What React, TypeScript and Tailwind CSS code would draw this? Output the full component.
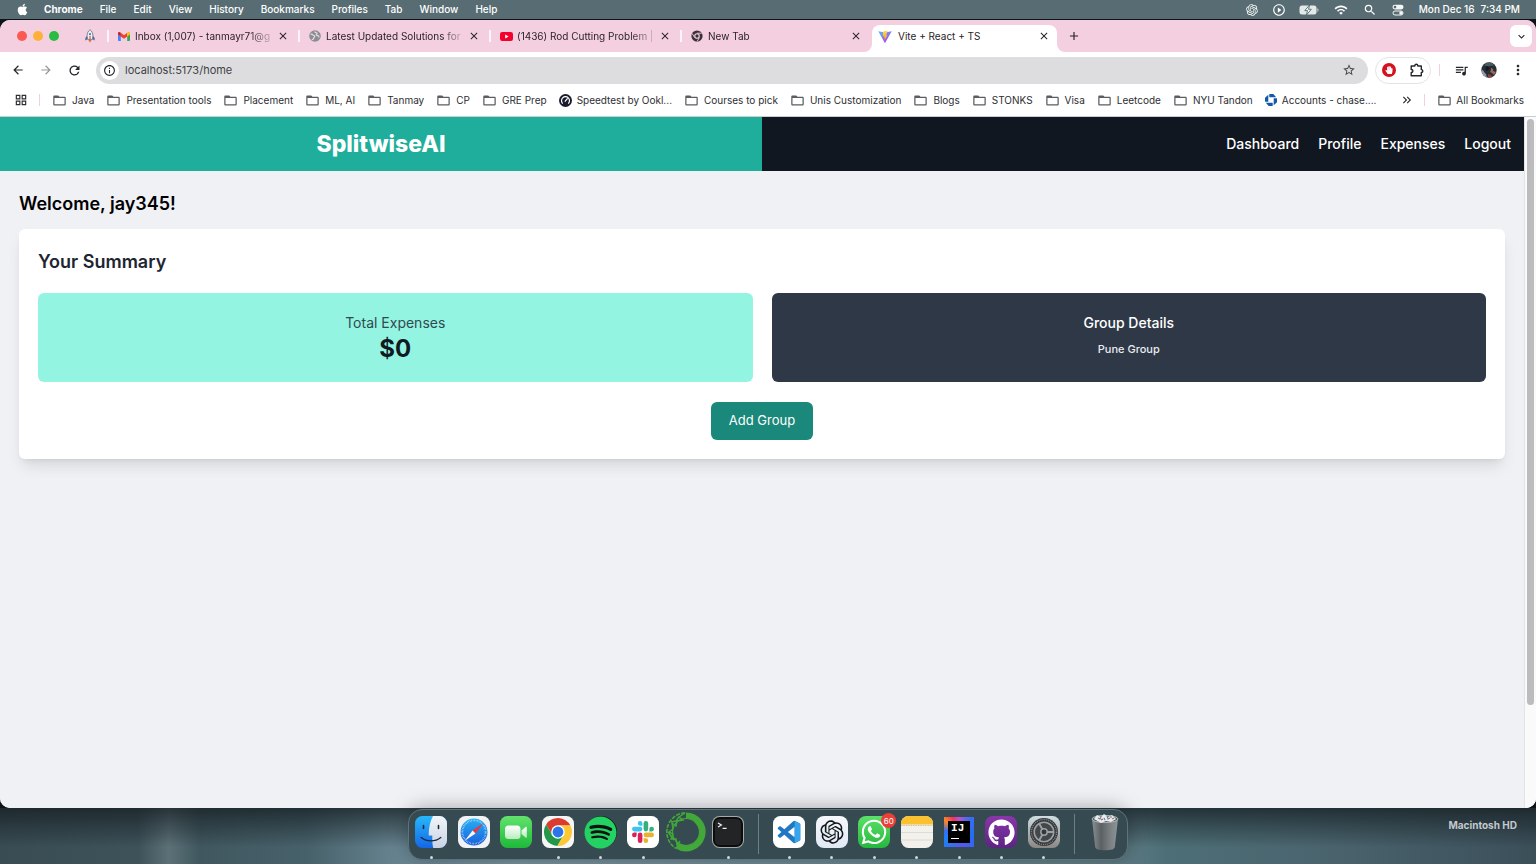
import type { ReactNode } from "react";
import { FaApple, FaSpotify, FaWhatsapp, FaGithub, FaHandPaper } from "react-icons/fa";
import { RiOpenaiFill } from "react-icons/ri";
import {
  MdArrowBack,
  MdArrowForward,
  MdRefresh,
  MdInfoOutline,
  MdFolderOpen,
  MdStarBorder,
  MdQueueMusic,
  MdMoreVert,
  MdKeyboardArrowDown,
  MdClose,
  MdAdd,
  MdOutlineGridView,
  MdPlayCircleOutline,
  MdWifi,
  MdSearch,
  MdKeyboardDoubleArrowRight,
} from "react-icons/md";

const sans = "font-['Inter','Liberation_Sans',sans-serif]";

/* ---------- menu bar ---------- */

const menus = ["File", "Edit", "View", "History", "Bookmarks", "Profiles", "Tab", "Window", "Help"];

function BatteryIcon() {
  return (
    <svg viewBox="0 0 20 12" className="h-3 w-5" aria-hidden="true">
      <rect x="0.5" y="1.5" width="17" height="9" rx="2.5" fill="#f3f5f6" fillOpacity="0.9" />
      <path d="M18.3 4.3v3.4c.9-.3 1.2-.9 1.2-1.700s-.3-1.400-1.200-1.700z" fill="#c9d1d4" />
      <path d="M10.600 1 5.800 6.600h2.700L7.400 11l4.900-5.700H9.500z" fill="#f8fafa" stroke="#566a70" strokeWidth="0.9" />
    </svg>
  );
}

function ControlCenterIcon() {
  return (
    <svg viewBox="0 0 12 12" className="size-3" aria-hidden="true">
      <rect x="0.500" y="0.800" width="11" height="4.600" rx="2.300" fill="#f3f5f6" />
      <circle cx="3" cy="3.100" r="1.300" fill="#566a70" />
      <rect x="1" y="7" width="10" height="4" rx="2" fill="none" stroke="#f3f5f6" strokeWidth="1" />
      <circle cx="9" cy="9" r="1.800" fill="#f3f5f6" />
    </svg>
  );
}

function MenuBar() {
  return (
    <header className="flex h-[19px] shrink-0 items-center justify-between bg-[#586d73] px-4 text-[10px] font-medium text-white">
      <nav aria-label="Menu bar" className="flex items-center gap-[17px]">
        <FaApple className="-mr-[2px] size-[13px]" />
        <button className="font-bold">Chrome</button>
        {menus.map((m) => (
          <button key={m}>{m}</button>
        ))}
      </nav>
      <div className="flex items-center gap-[15px]">
        <RiOpenaiFill className="-mr-[2px] size-[14px]" />
        <MdPlayCircleOutline className="-mr-[2px] size-[14px]" />
        <BatteryIcon />
        <MdWifi className="size-[14px]" />
        <MdSearch className="size-[14px]" />
        <ControlCenterIcon />
        <div className="flex gap-[6px] whitespace-nowrap">
          <span>Mon Dec 16</span>
          <span>7:34 PM</span>
        </div>
      </div>
    </header>
  );
}

/* ---------- favicons ---------- */

function RocketIcon() {
  return (
    <svg viewBox="0 0 12 14" className="h-[14px] w-3" aria-hidden="true">
      <path d="M3.300 6.500 1.300 9v2.500l2.400-1.300zM8.700 6.500l2 2.500v2.500l-2.400-1.300z" fill="#4a6fa5" />
      <path d="M6 .7c2 1.500 2.900 3.700 2.900 5.900 0 1.600-.4 3-1 4.200H4.100c-.6-1.200-1-2.600-1-4.200C3.100 4.400 4 2.200 6 .7z" fill="#eef0f4" stroke="#555b6b" strokeWidth="0.7" />
      <circle cx="6" cy="5.200" r="1.100" fill="#4f78b5" />
      <path d="M6 7v4" stroke="#c23b30" strokeWidth="1" />
      <path d="M4.600 11h2.800L6 13.800z" fill="#e2702a" />
    </svg>
  );
}

function GmailIcon() {
  return (
    <svg viewBox="0 0 12 9" className="h-[9px] w-3" aria-hidden="true">
      <path d="M0 1.500V8.200c0 .4.400.8.800.8h2V4.400z" fill="#4285f4" />
      <path d="M12 1.500V8.200c0 .4-.4.800-.8.800h-2V4.400z" fill="#34a853" />
      <path d="M2.800 4.400V.8L6 3.200 9.200.8v3.600L6 6.800z" fill="#ea4335" />
      <path d="M0 1.400v1L2.800 4.400V.8L2 .3C1.100-.3 0 .3 0 1.400z" fill="#c5221f" />
      <path d="M12 1.400v1L9.200 4.400V.8l.8-.5c.9-.6 2 0 2 1.100z" fill="#fbbc04" />
    </svg>
  );
}

function GlobeIcon() {
  return (
    <svg viewBox="0 0 12 12" className="size-3" aria-hidden="true">
      <circle cx="6" cy="6" r="5.800" fill="#8b8f94" />
      <path d="M1.500 4.200c1.200-.4 2 .2 2.600.9s1.800.3 1.700 1.400-1.300 1-1.400 2.200c0 .8-.9 1.100-1.600.5M6 1.400c-.3 1 .8 1.300 1.500 1.300s.9 1 .1 1.500 0 1.400 1 1.400 1.500.8 1.300 1.900" fill="none" stroke="#eadce3" strokeWidth="1.100" />
    </svg>
  );
}

function YoutubeIcon() {
  return (
    <svg viewBox="0 0 13 9" className="h-[9px] w-[13px]" aria-hidden="true">
      <rect width="13" height="9" rx="2.200" fill="#f5002d" />
      <path d="M5.200 2.500v4l3.400-2z" fill="#fff" />
    </svg>
  );
}

function ChromeMonoIcon() {
  return (
    <svg viewBox="0 0 32 32" className="size-3" aria-hidden="true">
      <circle cx="16" cy="16" r="15" fill="#3a3237" />
      <path d="M16 8.500h13M9.500 20 3 9M22.500 20 16 31" stroke="#f4cfe0" strokeWidth="2.400" />
      <circle cx="16" cy="16" r="6" fill="#3a3237" stroke="#f4cfe0" strokeWidth="3" />
    </svg>
  );
}

function ViteIcon() {
  return (
    <svg viewBox="0 0 14 13" className="h-[13px] w-[14px]" aria-hidden="true">
      <defs>
        <linearGradient id="vite-body" x1="0" y1="0" x2="0.700" y2="1">
          <stop offset="0" stopColor="#47bfff" />
          <stop offset="1" stopColor="#b03be8" />
        </linearGradient>
        <linearGradient id="vite-bolt" x1="0" y1="0" x2="0" y2="1">
          <stop offset="0" stopColor="#ffdc5a" />
          <stop offset="1" stopColor="#ff9a1f" />
        </linearGradient>
      </defs>
      <path d="M.3 1.200 7 2.400l6.700-1.200L7.200 12.800a.3.300 0 0 1-.5 0z" fill="url(#vite-body)" />
      <path d="M9.700.4 5 1.400 4.700 6.200l1.400-.3-.4 2 1.300-.3-.6 2.800 3.200-5.100-1.500.3.800-2.300z" fill="url(#vite-bolt)" />
    </svg>
  );
}

/* ---------- tab strip ---------- */

const tabs: { title: string; icon: ReactNode }[] = [
  { title: "Inbox (1,007) - tanmayr71@g", icon: <GmailIcon /> },
  { title: "Latest Updated Solutions for", icon: <GlobeIcon /> },
  { title: "(1436) Rod Cutting Problem |", icon: <YoutubeIcon /> },
  { title: "New Tab", icon: <ChromeMonoIcon /> },
];

function TabStrip() {
  return (
    <div className="flex h-8 shrink-0 items-center bg-[#f4cfe0] pl-[17px] pr-1 text-[10px] text-[#2b2329]">
      <div className="flex gap-[6px]">
        <button aria-label="Close window" className="size-[10px] rounded-full bg-[#fb5a52]" />
        <button aria-label="Minimize window" className="size-[10px] rounded-full bg-[#fdb13a]" />
        <button aria-label="Zoom window" className="size-[10px] rounded-full bg-[#28bd42]" />
      </div>
      <button aria-label="Pinned tab" className="ml-[25px] mr-[11px]">
        <RocketIcon />
      </button>
      {tabs.map((t) => (
        <div key={t.title} className="flex w-[191px] min-w-0 shrink items-center">
          <span className="h-3 w-[2px] shrink-0 bg-white/80" />
          <span className="ml-2 flex w-[14px] shrink-0 justify-center">{t.icon}</span>
          <span className="ml-1 min-w-0 grow whitespace-nowrap mask-r-from-80%">{t.title}</span>
          <button aria-label={`Close ${t.title}`} className="mr-[9px]">
            <MdClose className="size-3" />
          </button>
        </div>
      ))}
      <div className="relative ml-px flex w-[185px] shrink items-center self-stretch">
        <div className="mt-[5px] flex h-[27px] w-full items-center rounded-t-lg bg-white pb-[5px] pl-[6px] pr-[7px]">
          <ViteIcon />
          <span className="ml-[6px] grow">Vite + React + TS</span>
          <button aria-label="Close Vite + React + TS">
            <MdClose className="size-3" />
          </button>
        </div>
        <svg viewBox="0 0 8 8" className="absolute -left-2 bottom-0 size-2" aria-hidden="true">
          <path d="M8 0v8H0a8 8 0 0 0 8-8z" fill="#fff" />
        </svg>
        <svg viewBox="0 0 8 8" className="absolute -right-2 bottom-0 size-2" aria-hidden="true">
          <path d="M0 0v8h8a8 8 0 0 1-8-8z" fill="#fff" />
        </svg>
      </div>
      <button aria-label="New tab" className="ml-[10px]">
        <MdAdd className="size-[14px]" />
      </button>
      <button aria-label="Search tabs" className="ml-auto flex size-[22px] items-center justify-center rounded-md bg-white">
        <MdKeyboardArrowDown className="size-[13px]" />
      </button>
    </div>
  );
}

/* ---------- toolbar ---------- */

function PuzzleIcon() {
  return (
    <svg viewBox="0 0 14 14" className="size-[14px]" aria-hidden="true">
      <path
        d="M1.200 3h3.600c0-1 .5-1.700 1.500-1.700S7.800 2 7.800 3h3.500v3.600c1 0 1.500.6 1.500 1.400s-.5 1.500-1.500 1.500v3.300H1.200V9.500c1 0 1.700-.6 1.700-1.500S2.200 6.500 1.200 6.500z"
        fill="none"
        stroke="#23262a"
        strokeWidth="1.400"
        strokeLinejoin="round"
      />
    </svg>
  );
}

function Toolbar() {
  return (
    <div className="flex h-[36px] shrink-0 items-center bg-white pl-[11px] pr-[10px] text-[#23262a]">
      <button aria-label="Back">
        <MdArrowBack className="size-[14px]" />
      </button>
      <button aria-label="Forward" className="ml-[14px] text-[#94979b]">
        <MdArrowForward className="size-[14px]" />
      </button>
      <button aria-label="Reload" className="ml-[14px]">
        <MdRefresh className="size-[15px]" />
      </button>
      <div className="ml-[14px] flex h-[27px] grow items-center rounded-full bg-[#dddddf] pl-1 pr-3">
        <button aria-label="Site information" className="flex size-[19px] items-center justify-center rounded-full bg-white">
          <MdInfoOutline className="size-[13px]" />
        </button>
        <input
          aria-label="Address"
          defaultValue="localhost:5173/home"
          className="ml-[6px] min-w-0 grow bg-transparent text-[11px] text-[#3f4246] outline-none"
        />
        <button aria-label="Bookmark this tab">
          <MdStarBorder className="size-[14px] text-[#44474a]" />
        </button>
      </div>
      <div className="ml-[7px] flex h-[27px] w-14 items-center justify-between rounded-full border border-[#e3e3e6] px-[6px]">
        <button aria-label="Ad blocker" className="flex size-[14px] items-center justify-center rounded-full bg-[#d5101f] text-white">
          <FaHandPaper className="size-2" />
        </button>
        <button aria-label="Extensions">
          <PuzzleIcon />
        </button>
      </div>
      <span className="ml-2 h-3 w-px bg-[#f4cfe0]" />
      <button aria-label="Media controls" className="ml-[14px]">
        <MdQueueMusic className="size-[15px]" />
      </button>
      <button aria-label="Account" className="ml-3">
        <svg viewBox="0 0 16 16" className="size-4" aria-hidden="true">
          <clipPath id="avatar-clip">
            <circle cx="8" cy="8" r="7.700" />
          </clipPath>
          <g clipPath="url(#avatar-clip)">
            <rect width="16" height="16" fill="#2a2d38" />
            <path d="M0 7 3 2l5-2H0z" fill="#7d93a6" />
            <path d="M3 4c2-1 3 1 6 0s3 1 4-1l-3-3-5 1z" fill="#4a5a62" />
            <path d="M10 6c1 0 3 1 2 3l3 1-2 3-2-2-2-1 1-2z" fill="#9a6a52" />
            <path d="M1 8c2 0 2 3 4 4l1 4-5-3z" fill="#8e9ca5" />
            <path d="M6 4c-2 1-2 4 0 5l3-3z" fill="#15171d" />
            <path d="m7 12 3 1 2 3H7z" fill="#8c3f3c" />
          </g>
        </svg>
      </button>
      <button aria-label="More" className="ml-[13px]">
        <MdMoreVert className="size-4" />
      </button>
    </div>
  );
}

/* ---------- bookmarks ---------- */

function SpeedtestIcon() {
  return (
    <svg viewBox="0 0 14 14" className="size-[13px] shrink-0" aria-hidden="true">
      <circle cx="7" cy="7" r="7" fill="#1a1b2e" />
      <path d="M4 10.300a4.300 4.300 0 1 1 6 0" fill="none" stroke="#fff" strokeWidth="1.300" />
      <path d="m6.300 8.300 3-3.700" stroke="#fff" strokeWidth="1.300" />
    </svg>
  );
}

function ChaseIcon() {
  return (
    <svg viewBox="0 0 12 12" className="size-3 shrink-0" aria-hidden="true">
      <path
        d="M4.300 0h4L11.200 3.300H4.300zM12 4.300v4L8.700 11.200V4.300zM7.700 12h-4L.8 8.700h6.900zM0 7.700v-4L3.300.8v6.900z"
        fill="#1259a8"
      />
    </svg>
  );
}

function Folder() {
  return <MdFolderOpen className="size-[15px] shrink-0 text-[#5a5d61]" />;
}

const bookmarks: { label: string; icon?: ReactNode }[] = [
  { label: "Java" },
  { label: "Presentation tools" },
  { label: "Placement" },
  { label: "ML, AI" },
  { label: "Tanmay" },
  { label: "CP" },
  { label: "GRE Prep" },
  { label: "Speedtest by Ookl...", icon: <SpeedtestIcon /> },
  { label: "Courses to pick" },
  { label: "Unis Customization" },
  { label: "Blogs" },
  { label: "STONKS" },
  { label: "Visa" },
  { label: "Leetcode" },
  { label: "NYU Tandon" },
  { label: "Accounts - chase....", icon: <ChaseIcon /> },
];

function BookmarksBar() {
  return (
    <nav aria-label="Bookmarks" className="flex h-[29px] shrink-0 items-center border-b border-[#c9ccd2] bg-white pb-1 pl-[14px] pr-3 text-[10px] text-[#2c2e32]">
      <button aria-label="Apps">
        <MdOutlineGridView className="size-[14px]" />
      </button>
      <span className="ml-[11px] h-3 w-px shrink-0 bg-[#f4cfe0]" />
      <div className="ml-3 flex min-w-0 grow items-center gap-3">
        {bookmarks.map((b) => (
          <a key={b.label} href="#" className="flex items-center gap-[5px] whitespace-nowrap">
            {b.icon ?? <Folder />}
            {b.label}
          </a>
        ))}
      </div>
      <button aria-label="More bookmarks">
        <MdKeyboardDoubleArrowRight className="size-[14px]" />
      </button>
      <span className="ml-[10px] h-3 w-px shrink-0 bg-[#f4cfe0]" />
      <a href="#" className="ml-3 flex items-center gap-1 whitespace-nowrap">
        <Folder />
        All Bookmarks
      </a>
    </nav>
  );
}

/* ---------- web page ---------- */

const links = ["Dashboard", "Profile", "Expenses", "Logout"];

function HomePage() {
  return (
    <div className="flex min-h-0 grow bg-[#f0f1f5]">
      <div className="min-w-0 grow">
        <div className="grid h-[54px] grid-cols-2 items-stretch">
          <div className="flex items-center justify-center bg-[#1fae9b]">
            <h1 className="text-[23px] font-extrabold text-white">SplitwiseAI</h1>
          </div>
          <nav aria-label="Main" className="flex items-center justify-end gap-[19px] bg-[#111721] pb-[2px] pr-[13px] text-[14px] font-medium text-white">
            {links.map((l) => (
              <a key={l} href="#">
                {l}
              </a>
            ))}
          </nav>
        </div>
        <main className="px-[19px] pt-[19px]">
          <h2 className="text-[18px] leading-7 font-semibold text-black">Welcome, jay345!</h2>
          <section className="mt-[11px] rounded-md bg-white p-[19px] shadow-lg">
            <h3 className="text-[18px] leading-7 font-semibold text-[#1d2531]">Your Summary</h3>
            <div className="mt-[17px] grid grid-cols-2 gap-[19px] text-center">
              <div className="h-[89px] rounded-md bg-[#93f5e1] pt-[19px]">
                <h4 className="text-[14px] leading-[22px] text-[#2f4a50]">Total Expenses</h4>
                <p className="text-[24px] leading-[30px] font-bold text-[#0f1a22]">$0</p>
              </div>
              <div className="h-[89px] rounded-md bg-[#2f3847] pt-[19px] text-white">
                <h4 className="text-[14px] leading-[22px] font-medium">Group Details</h4>
                <p className="text-[11px] leading-[30px] font-medium text-[#e9ebef]">Pune Group</p>
              </div>
            </div>
            <div className="mt-5 flex justify-center">
              <button className="h-[38px] rounded-md bg-[#1a887b] px-[18px] text-[13px] text-white">Add Group</button>
            </div>
          </section>
        </main>
      </div>
      <div className="w-3 shrink-0 border-l border-[#e4e4e6] bg-[#fafafa] px-[2px] pt-[2px]">
        <div className="h-[85%] w-[7px] rounded-full bg-[#bcbcbe]" />
      </div>
    </div>
  );
}

/* ---------- dock ---------- */

function FinderIcon() {
  return (
    <svg viewBox="0 0 32 32" className="size-8" aria-hidden="true">
      <defs>
        <linearGradient id="finder-l" x1="0" y1="0" x2="0" y2="1">
          <stop offset="0" stopColor="#27b8fb" />
          <stop offset="1" stopColor="#1566e6" />
        </linearGradient>
        <linearGradient id="finder-r" x1="0" y1="0" x2="0" y2="1">
          <stop offset="0" stopColor="#f2f5f9" />
          <stop offset="1" stopColor="#c9d3e2" />
        </linearGradient>
      </defs>
      <rect width="32" height="32" rx="7.500" fill="url(#finder-l)" />
      <path d="M18 0h6.500A7.500 7.500 0 0 1 32 7.500v17a7.500 7.500 0 0 1-7.500 7.500h-6.300c-.8-3.500-1-7-.9-12.500h-3.600C13.700 12 15 5.500 18 0z" fill="url(#finder-r)" />
      <path d="M8.500 9.500v3M23.500 9.500v3" stroke="#16283f" strokeWidth="1.600" strokeLinecap="round" />
      <path d="M6.200 21.500c5.500 4.500 14 4.500 19.600 0" fill="none" stroke="#16283f" strokeWidth="1.300" strokeLinecap="round" />
    </svg>
  );
}

function SafariIcon() {
  return (
    <svg viewBox="0 0 32 32" className="size-8" aria-hidden="true">
      <defs>
        <linearGradient id="safari-dial" x1="0" y1="0" x2="0" y2="1">
          <stop offset="0" stopColor="#27b0f5" />
          <stop offset="1" stopColor="#1a5edc" />
        </linearGradient>
      </defs>
      <rect width="32" height="32" rx="7.500" fill="#f1f2f4" />
      <circle cx="16" cy="16" r="13.500" fill="url(#safari-dial)" />
      <circle cx="16" cy="16" r="11.700" fill="none" stroke="#fff" strokeOpacity="0.800" strokeWidth="1.800" strokeDasharray="0.500 1.031" />
      <path d="M25.500 7 14.600 14.500 17.500 17.400z" fill="#e8383b" />
      <path d="M6.500 25 14.600 14.500 17.500 17.400z" fill="#f4f6f9" />
    </svg>
  );
}

function FaceTimeIcon() {
  return (
    <svg viewBox="0 0 32 32" className="size-8" aria-hidden="true">
      <defs>
        <linearGradient id="ft-bg" x1="0" y1="0" x2="0" y2="1">
          <stop offset="0" stopColor="#61e36c" />
          <stop offset="1" stopColor="#1fb83a" />
        </linearGradient>
        <linearGradient id="ft-cam" x1="0" y1="0" x2="0" y2="1">
          <stop offset="0" stopColor="#fff" />
          <stop offset="1" stopColor="#b8ecc0" />
        </linearGradient>
      </defs>
      <rect width="32" height="32" rx="7.500" fill="url(#ft-bg)" />
      <rect x="5" y="9.500" width="15.500" height="13.500" rx="3.500" fill="url(#ft-cam)" />
      <path d="m21.500 14.500 4-3.500c.6-.5 1.300-.2 1.300.6v9.300c0 .8-.7 1.100-1.300.6l-4-3.500z" fill="url(#ft-cam)" />
    </svg>
  );
}

function ChromeIcon() {
  return (
    <svg viewBox="0 0 32 32" className="size-8" aria-hidden="true">
      <rect width="32" height="32" rx="7.500" fill="#f6f6f6" />
      <g transform="translate(-1.300 -1.300) scale(1.080)">
        <path d="M5.040 9.015A13 13 0 0 1 27.530 10H16L10.800 19z" fill="#dd3b2f" />
        <path d="M5.040 9.015A13 13 0 0 0 15.430 28.985L21.200 19H10.800z" fill="#22984a" />
        <path d="M27.530 10A13 13 0 0 1 15.430 28.985L21.200 19 16 10z" fill="#fcc934" />
        <circle cx="16" cy="16" r="6.300" fill="#fff" />
        <circle cx="16" cy="16" r="5" fill="#2a76e8" />
      </g>
    </svg>
  );
}

function SpotifyIcon() {
  return (
    <span className="flex size-8 items-center justify-center rounded-full bg-[#0c1310]">
      <FaSpotify className="size-[33px] shrink-0 text-[#24d163]" />
    </span>
  );
}

function SlackIcon() {
  return (
    <svg viewBox="-5.500 -5.500 35 35" className="size-8" aria-hidden="true">
      <rect x="-5.500" y="-5.500" width="35" height="35" rx="8.200" fill="#fff" />
      <path fill="#dd1f59" d="M5.042 15.165a2.528 2.528 0 0 1-2.520 2.523A2.528 2.528 0 0 1 0 15.165a2.527 2.527 0 0 1 2.522-2.520h2.520v2.520zM6.313 15.165a2.527 2.527 0 0 1 2.521-2.520 2.527 2.527 0 0 1 2.521 2.520v6.313A2.528 2.528 0 0 1 8.834 24a2.528 2.528 0 0 1-2.521-2.522v-6.313z" />
      <path fill="#3cc3ee" d="M8.834 5.042a2.528 2.528 0 0 1-2.521-2.520A2.528 2.528 0 0 1 8.834 0a2.528 2.528 0 0 1 2.521 2.522v2.520H8.834zM8.834 6.313a2.528 2.528 0 0 1 2.521 2.521 2.528 2.528 0 0 1-2.521 2.521H2.522A2.528 2.528 0 0 1 0 8.834a2.528 2.528 0 0 1 2.522-2.521h6.312z" />
      <path fill="#32b07d" d="M18.956 8.834a2.528 2.528 0 0 1 2.522-2.521A2.528 2.528 0 0 1 24 8.834a2.528 2.528 0 0 1-2.522 2.521h-2.522V8.834zM17.688 8.834a2.528 2.528 0 0 1-2.523 2.521 2.527 2.527 0 0 1-2.520-2.521V2.522A2.527 2.527 0 0 1 15.165 0a2.528 2.528 0 0 1 2.523 2.522v6.312z" />
      <path fill="#e9b131" d="M15.165 18.956a2.528 2.528 0 0 1 2.523 2.522A2.528 2.528 0 0 1 15.165 24a2.527 2.527 0 0 1-2.520-2.522v-2.522h2.520zM15.165 17.688a2.527 2.527 0 0 1-2.520-2.523 2.526 2.526 0 0 1 2.520-2.520h6.313A2.527 2.527 0 0 1 24 15.165a2.528 2.528 0 0 1-2.522 2.523h-6.313z" />
    </svg>
  );
}

function AnacondaIcon() {
  return (
    <svg viewBox="0 0 40 40" className="size-10" aria-hidden="true">
      <path d="M20 3.500a16.500 16.500 0 1 1-9 30.300" fill="none" stroke="#41a839" strokeWidth="6" />
      <circle cx="20" cy="20" r="13.500" fill="none" stroke="#41a839" strokeWidth="1.200" />
      <path d="M19 .8A19.300 19.300 0 0 0 10 36.500" fill="none" stroke="#41a839" strokeWidth="1.600" strokeDasharray="4 1.200" />
      <path d="m19 1-6 4 4 3-6 1-1 5-4-3 1 6-4 3 4 2-2 5 5 0 1 6 3-4M13 5l-3 4M10 9 5 10M2 20l6 8" fill="none" stroke="#41a839" strokeWidth="1.400" />
    </svg>
  );
}

function TerminalIcon() {
  return (
    <svg viewBox="0 0 32 32" className="size-8" aria-hidden="true">
      <rect width="32" height="32" rx="7.500" fill="#a5a9aa" />
      <rect x="1" y="1" width="30" height="30" rx="6.700" fill="#0c0d0d" />
      <rect x="3" y="3" width="26" height="26" rx="4.500" fill="#232425" />
      <path d="m6 7 3.400 2L6 11M10.600 12.300h4" fill="none" stroke="#f0f0f0" strokeWidth="1.200" />
    </svg>
  );
}

function VsCodeIcon() {
  return (
    <svg viewBox="-5 -5 34 34" className="size-8" aria-hidden="true">
      <rect x="-5" y="-5" width="34" height="34" rx="8" fill="#fff" />
      <path fill="#1e78c2" d="M23.150 2.587L18.210.210a1.494 1.494 0 0 0-1.705.290l-9.460 8.630-4.120-3.128a.999.999 0 0 0-1.276.057L.327 7.261A1 1 0 0 0 .326 8.740L3.899 12 .326 15.260a1 1 0 0 0 .001 1.479L1.650 17.940a.999.999 0 0 0 1.276.057l4.120-3.128 9.460 8.630a1.492 1.492 0 0 0 1.704.290l4.942-2.377A1.500 1.500 0 0 0 24 20.060V3.939a1.500 1.500 0 0 0-.850-1.352zm-5.146 14.861L10.826 12l7.178-5.448v10.896z" />
      <path fill="#37a4ee" d="m18 .1 5.150 2.487c.5.250.850.750.850 1.352V20.060c0 .6-.3 1.100-.850 1.352L18 23.900z" />
    </svg>
  );
}

function NotesIcon() {
  return (
    <svg viewBox="0 0 32 32" className="size-8" aria-hidden="true">
      <clipPath id="notes-clip">
        <rect width="32" height="32" rx="7.500" />
      </clipPath>
      <g clipPath="url(#notes-clip)">
        <rect width="32" height="32" fill="#f3f1ec" />
        <rect width="32" height="8.500" fill="#fcc12f" />
        <path d="M0 9.500h32" stroke="#b9ad92" strokeWidth="0.900" strokeDasharray="0.800 0.900" />
        <path d="M0 16.500h32M0 24h32" stroke="#d8d5ce" strokeWidth="0.800" />
      </g>
    </svg>
  );
}

function IntellijIcon() {
  return (
    <span className="flex size-[30px] items-center justify-center bg-[conic-gradient(from_0deg,#c04fd0,#3a6cf5_40deg,#1f6ff0_110deg,#5a55f0_170deg,#1a82f5_240deg,#3a6cf5_275deg,#fb8a25_310deg,#f5315d_335deg,#c04fd0)]">
      <span className="flex size-[22px] flex-col items-start bg-black pl-[3px] pt-[2px] font-['Liberation_Mono',monospace] text-[11px] leading-[11px] font-bold text-white">
        IJ
        <span className="mt-[4px] h-px w-2 bg-white" />
      </span>
    </span>
  );
}

function SettingsIcon() {
  return (
    <svg viewBox="0 0 32 32" className="size-8" aria-hidden="true">
      <defs>
        <linearGradient id="set-bg" x1="0" y1="0" x2="0" y2="1">
          <stop offset="0" stopColor="#cfdde2" />
          <stop offset="1" stopColor="#8b8784" />
        </linearGradient>
      </defs>
      <rect width="32" height="32" rx="7.500" fill="url(#set-bg)" />
      <circle cx="16" cy="16" r="14" fill="#33373a" />
      <circle cx="16" cy="16" r="12.500" fill="none" stroke="#858a8d" strokeWidth="1.400" strokeDasharray="1 0.963" />
      <circle cx="16" cy="16" r="9.800" fill="#43474a" stroke="#9ba0a3" strokeWidth="1.600" />
      <circle cx="16" cy="16" r="3.200" fill="#33373a" stroke="#9ba0a3" strokeWidth="1.500" />
      <path d="M19 16h6.500M14.500 13.400l-3.300-5.700M14.500 18.600l-3.300 5.700" stroke="#9ba0a3" strokeWidth="1.900" />
    </svg>
  );
}

function TrashIcon() {
  return (
    <svg viewBox="0 0 30 38" className="h-[38px] w-[30px]" aria-hidden="true">
      <defs>
        <linearGradient id="trash" x1="0" y1="0" x2="1" y2="0">
          <stop offset="0" stopColor="#8b9193" />
          <stop offset="0.350" stopColor="#5b6062" />
          <stop offset="0.650" stopColor="#777d7f" />
          <stop offset="1" stopColor="#8f9597" />
        </linearGradient>
      </defs>
      <path d="M2 6h26l-3.200 28c-.2 2-3.500 3.300-9.800 3.300S5.400 36 5.200 34z" fill="url(#trash)" />
      <ellipse cx="15" cy="6" rx="13" ry="3.600" fill="#5a5f61" stroke="#b8bdbf" strokeWidth="0.900" />
      <path d="m4 6 3-4 4 2 3-3 4 3 4-2 4 4-5 3-5-1-5 2z" fill="#e9ecee" />
      <path d="m8 5 2 1 1-2M17 3l1 3 2-1M14 5l1 2M22 6l2-1" fill="none" stroke="#6a7f94" strokeWidth="1.100" />
      <path d="m11 7 2-1M20 4h2" stroke="#c5573f" strokeWidth="1.200" />
    </svg>
  );
}

type DockApp = { name: string; icon: ReactNode; running?: boolean; badge?: string };

const leftApps: DockApp[] = [
  { name: "Finder", icon: <FinderIcon />, running: true },
  { name: "Safari", icon: <SafariIcon /> },
  { name: "FaceTime", icon: <FaceTimeIcon /> },
  { name: "Google Chrome", icon: <ChromeIcon />, running: true },
  { name: "Spotify", icon: <SpotifyIcon />, running: true },
  { name: "Slack", icon: <SlackIcon />, running: true },
  { name: "Anaconda", icon: <AnacondaIcon /> },
  { name: "Terminal", icon: <TerminalIcon />, running: true },
];

const rightApps: DockApp[] = [
  { name: "Visual Studio Code", icon: <VsCodeIcon />, running: true },
  {
    name: "ChatGPT",
    running: true,
    icon: (
      <span className="flex size-8 items-center justify-center rounded-lg bg-gradient-to-b from-[#f6f9fd] to-[#dfe9f5] text-[#15181b]">
        <RiOpenaiFill className="size-7" />
      </span>
    ),
  },
  {
    name: "WhatsApp",
    running: true,
    badge: "60",
    icon: (
      <span className="flex size-8 items-center justify-center rounded-lg bg-gradient-to-b from-[#5be169] to-[#22b83c] text-white">
        <FaWhatsapp className="size-[28px]" />
      </span>
    ),
  },
  { name: "Notes", icon: <NotesIcon />, running: true },
  { name: "IntelliJ IDEA", icon: <IntellijIcon />, running: true },
  {
    name: "GitHub Desktop",
    running: true,
    icon: (
      <span className="flex size-8 items-center justify-center rounded-lg bg-gradient-to-b from-[#8a36ab] to-[#5c2483] text-white">
        <FaGithub className="size-[27px]" />
      </span>
    ),
  },
  { name: "System Settings", icon: <SettingsIcon />, running: true },
];

function DockItem({ app }: { app: DockApp }) {
  return (
    <button aria-label={app.name} className="flex flex-1 flex-col items-center gap-[2px]">
      <span className="relative flex h-11 items-center">
        {app.icon}
        {app.badge && (
          <span className="absolute -right-[6px] top-[3px] flex size-[15px] items-center justify-center rounded-full bg-[#ea3f38] text-[8px] text-white">
            {app.badge}
          </span>
        )}
      </span>
      <span className={app.running ? "size-[3px] rounded-full bg-[#cdd8dc]" : "size-[3px]"} />
    </button>
  );
}

function Desktop() {
  return (
    <footer className="relative flex h-14 shrink-0 justify-center bg-[linear-gradient(to_bottom,rgba(18,26,30,0.7),rgba(18,26,30,0)_70%),linear-gradient(to_right,#394c54,#3d5259_9%,#5c7177_11%,#40575f_13%,#47616a_20%,#6d8b98_27%,#7d98a5_34%,#64818a_72%,#4d6e76_76%,#4a646e_86%,#3b4f59)]">
      <div className="mt-px flex h-[51px] w-[720px] items-start rounded-[14px] border border-[#5d7379] bg-[#364b51] px-px shadow-[0_0_20px_rgba(0,0,0,0.35)]">
        {leftApps.map((a) => (
          <DockItem key={a.name} app={a} />
        ))}
        <span className="mx-[9px] mt-1 h-10 w-px bg-[#6d8087]" />
        {rightApps.map((a) => (
          <DockItem key={a.name} app={a} />
        ))}
        <span className="mx-[9px] mt-1 h-10 w-px bg-[#6d8087]" />
        <button aria-label="Trash" className="flex h-11 w-[42px] items-center justify-center">
          <TrashIcon />
        </button>
      </div>
      <span className="absolute right-[19px] top-[10px] text-[10px] font-bold text-[#c3c9cc]">Macintosh HD</span>
    </footer>
  );
}

export default function App() {
  return (
    <div className={`flex h-screen min-w-[1200px] flex-col bg-[#0e1316] ${sans}`}>
      <MenuBar />
      <div className="mt-px flex min-h-0 grow flex-col overflow-hidden rounded-[10px] bg-white">
        <TabStrip />
        <Toolbar />
        <BookmarksBar />
        <HomePage />
      </div>
      <Desktop />
    </div>
  );
}
